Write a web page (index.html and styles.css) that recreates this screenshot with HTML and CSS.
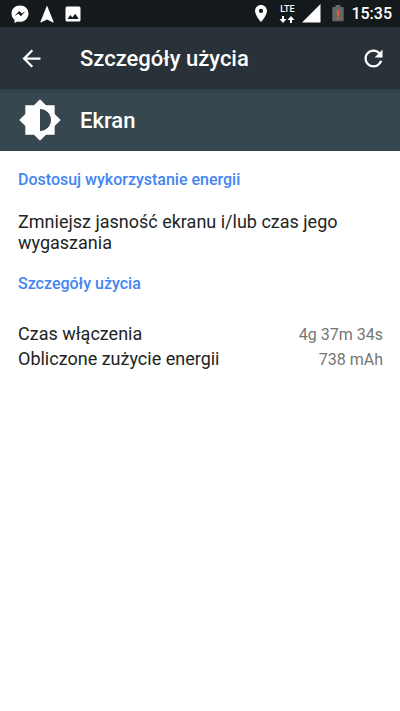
FILE: index.html
```html
<!DOCTYPE html>
<html lang="pl">
<head>
<meta charset="utf-8">
<meta name="viewport" content="width=device-width, initial-scale=1">
<title>Szczegóły użycia</title>
<link rel="stylesheet" href="styles.css">
</head>
<body>
<div class="status">
  <div class="status-group notices">
    <svg width="18" height="18" viewBox="0 0 18 18"><path fill="#fff" d="M9 0.5C4.200 .5 .5 4 .5 8.500c0 2.500 1.100 4.700 3 6.200V18l2.800-1.600c.9.200 1.700.4 2.700.4 4.800 0 8.500-3.700 8.500-8.300S13.800.5 9 .5z"/><path fill="#14191c" d="M3.500 11l4.700-5 2.500 2.500L14.500 6.200 9.900 11.200 7.400 8.800z"/></svg>
    <svg width="14" height="18" viewBox="0 0 14 18"><path fill="#fff" d="M7 .5L13.700 17 13 17.500 7 14.500 1 17.500 .3 17z"/></svg>
    <svg width="16" height="16" viewBox="0 0 16 16"><rect x=".5" y=".5" width="15" height="15" rx="1.500" fill="#fff"/><path fill="#14191c" d="M2.500 13l2.800-4 2 2.500 2.900-3.800 3.600 5.300z"/></svg>
  </div>
  <div class="status-group system">
    <svg class="pin" width="12" height="17" viewBox="5 2 14 20"><path fill="#fff" d="M12 2C8.130 2 5 5.130 5 9c0 5.250 7 13 7 13s7-7.750 7-13c0-3.870-3.130-7-7-7zm0 9.500a2.500 2.500 0 0 1 0-5 2.500 2.500 0 0 1 0 5z"/></svg>
    <div class="network">
      <span>LTE</span>
      <svg width="16" height="7" viewBox="0 0 16 7"><path fill="#fff" d="M3 0h2v3h2.500L4 7 .5 3H3zM11 7h2V4h2.500L12 0 8.500 4H11z"/></svg>
    </div>
    <svg class="signal" width="19" height="19" viewBox="0 0 19 19"><path fill="#fff" d="M18.500 0v18.500H0z"/></svg>
    <svg width="12" height="17" viewBox="0 0 12 17"><path fill="#646667" d="M3.500 0h5v2H11q.7 0 .7.700V15.500q0 .8-.8.800H1.100q-.8 0-.8-.8V2.700Q.3 2 1 2h2.500z"/><path fill="#f0582a" d="M5 5h2v6H5zM5 12h2v2H5z"/></svg>
    <time>15:35</time>
  </div>
</div>
<header class="toolbar">
  <button class="icon-button" aria-label="Wstecz"><svg width="27" height="27" viewBox="0 0 24 24"><path fill="#fff" d="M20 11H7.830l5.590-5.590L12 4l-8 8 8 8 1.410-1.410L7.830 13H20v-2z"/></svg></button>
  <h1>Szczegóły użycia</h1>
  <button class="icon-button" aria-label="Odśwież"><svg width="27" height="27" viewBox="0 0 24 24"><path fill="#fff" d="M17.650 6.350C16.200 4.900 14.210 4 12 4c-4.420 0-7.990 3.580-7.990 8s3.570 8 7.990 8c3.730 0 6.840-2.550 7.730-6h-2.080c-.82 2.330-3.040 4-5.650 4-3.310 0-6-2.690-6-6s2.690-6 6-6c1.660 0 3.140.69 4.220 1.780L13 11h7V4l-2.350 2.350z"/></svg></button>
</header>
<section class="app">
  <svg width="44" height="44" viewBox="0 0 24 24"><path fill="#fff" d="M20 15.310L23.310 12 20 8.690V4h-4.690L12 .69 8.690 4H4v4.690L.69 12 4 15.310V20h4.690L12 23.310 15.310 20H20v-4.690zM12 18V6c3.310 0 6 2.690 6 6s-2.690 6-6 6z"/></svg>
  <h2>Ekran</h2>
</section>
<main>
  <h3>Dostosuj wykorzystanie energii</h3>
  <p>Zmniejsz jasność ekranu i/lub czas jego wygaszania</p>
  <h3>Szczegóły użycia</h3>
  <dl>
    <div class="row"><dt>Czas włączenia</dt><dd>4g 37m 34s</dd></div>
    <div class="row"><dt>Obliczone zużycie energii</dt><dd>738 mAh</dd></div>
  </dl>
</main>
</body>
</html>
```
FILE: styles.css
```css
* { box-sizing: border-box; }
body {
  margin: 0;
  background: #fff;
  color: #212424;
  font-family: Roboto, "Liberation Sans", sans-serif;
}
h1, h2, h3, p, dl, dd { margin: 0; }
svg { display: block; flex: none; }

.status {
  display: flex;
  justify-content: space-between;
  align-items: center;
  height: 27px;
  padding: 0 8px 0 11px;
  background: #14191c;
  color: #fff;
}
.status-group { display: flex; align-items: center; }
.notices { gap: 11px; }
.system { gap: 7px; }
.pin { margin-right: 5px; }
.signal { margin-right: 4px; }
.network {
  display: flex;
  flex-direction: column;
  align-items: center;
  gap: 2px;
  font-size: 9px;
  font-weight: 500;
  line-height: 9px;
}
time { font-size: 16px; font-weight: 500; line-height: 20px; }

.toolbar {
  display: flex;
  align-items: center;
  height: 62px;
  padding: 0 13px 0 18px;
  background: #283238;
  color: #fff;
}
h1, h2 {
  padding-top: 2px;
  font-size: 22px;
  font-weight: 500;
  line-height: 28px;
}
h1 { flex: 1; padding-left: 35px; }
.icon-button {
  padding: 0;
  border: 0;
  background: none;
  cursor: pointer;
}

.app {
  display: flex;
  align-items: center;
  gap: 18px;
  height: 62px;
  padding: 0 18px;
  background: linear-gradient(#303e45, #37474f 4px);
  color: #fff;
}

main { padding: 18px 17px 18px 18px; }
h3 {
  color: #4285f4;
  font-size: 16px;
  font-weight: 500;
  line-height: 22px;
}
p {
  padding: 20px 0;
  font-size: 18px;
  line-height: 21px;
}
dl { padding-top: 26px; }
.row {
  display: flex;
  justify-content: space-between;
  align-items: baseline;
}
dt { font-size: 18px; line-height: 25px; }
dd { color: #757575; font-size: 16px; line-height: 23px; }
```
